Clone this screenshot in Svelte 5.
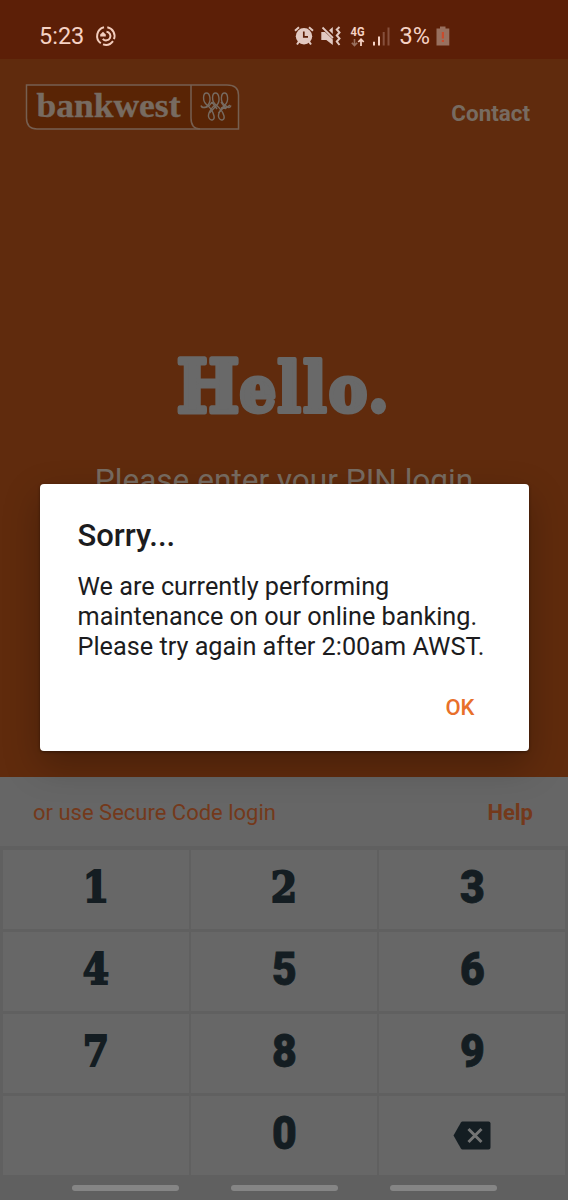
<script>
	const keys = ["1", "2", "3", "4", "5", "6", "7", "8", "9", "", "0", "del"];
	const slab = ["1", "2", "4", "7"];
	const lines = [
		"We are currently performing",
		"maintenance on our online banking.",
		"Please try again after 2:00am AWST.",
	];

	let open = true;
	let pin = "";

	function press(key) {
		if (key == "del") {
			pin = pin.slice(0, -1);
		} else {
			pin = pin + key;
		}
	}
</script>

<div class="screen">
	<header class="status">
		<span class="clock">5:23</span>
		<svg class="sync" width="20" height="20" viewBox="0 0 20 20">
			<g fill="none" stroke="#f3cdbd" stroke-width="2">
				<path d="M8 1.2A9 9 0 0 0 4.8 17.2M7 18.4A9 9 0 0 0 17 15.2M18 13.2A9 9 0 0 0 11.3 1.2" />
				<path d="M10.5 5.8A4.3 4.3 0 1 1 6.8 12.8" />
			</g>
			<path d="M4.2 8.6L7 5.8L9.8 8.6V10.5H4.2Z" fill="#f3cdbd" />
		</svg>
		<div class="indicators">
			<svg width="20" height="20" viewBox="0 0 20 20">
				<path d="M1 4.7L5 1.2M19 4.7L15 1.2M5 15.5L3 18.5M15 15.5L17 18.5" stroke="#e2c9c1" stroke-width="2" />
				<circle cx="10" cy="10.2" r="8.2" fill="#e2c9c1" />
				<path d="M9.8 5.5V10.8H14" fill="none" stroke="#5c1f07" stroke-width="1.7" />
			</svg>
			<svg class="mute" width="20" height="20" viewBox="0 0 20 20">
				<path d="M.3 6H4L11.8 13.5V19L5.3 14H.3ZM11.8 1V8L8 4.3Z" fill="#e2c9c1" />
				<path d="M1.5 1.5L12 12" stroke="#e2c9c1" stroke-width="1.8" />
				<path d="M18.5 1L15.8 3.5L18.5 6.5L15.8 9.5L18.5 12.5L15.8 15.5L18.5 19" fill="none" stroke="#e2c9c1" stroke-width="2" />
			</svg>
			<svg class="net" width="16" height="21" viewBox="0 0 16 21">
				<text x="0.5" y="10" textLength="14" lengthAdjust="spacingAndGlyphs">4G</text>
				<path d="M4.5 13V19.5M1.8 16.7L4.5 19.6L7.2 16.7" fill="none" stroke="#99705f" stroke-width="1.6" />
				<path d="M11 20V13.5M8.3 16L11 13.2L13.7 16" fill="none" stroke="#f6d2c4" stroke-width="1.8" />
			</svg>
			<svg class="signal" width="18" height="19" viewBox="0 0 18 19">
				<path d="M0 14.7H2V18.5H0ZM5 9.5H7V18.5H5Z" fill="#f6d2c4" />
				<path d="M9.7 5H11.7V18.5H9.7ZM14.5 .5H16.5V18.5H14.5Z" fill="#86503c" />
			</svg>
			<span class="percent">3%</span>
			<svg class="battery" width="14" height="20" viewBox="0 0 14 20">
				<path d="M4 .5H9.5V2.5H13.3V19.5H.5V2.5H4Z" fill="#98705f" />
				<path d="M6.9 6V12.5M6.9 14V16" stroke="#c84b2d" stroke-width="2.2" />
			</svg>
		</div>
	</header>

	<main class="hero">
		<div class="top">
			<svg class="logo" width="214" height="46" viewBox="0 0 214 46">
				<path d="M1.5 1H202Q213.5 1 213.5 11V45H12Q1.5 45 1.5 34Z" fill="#592405" stroke="#765f51" stroke-width="1.5" />
				<path d="M166 1V34Q166 45 175 45" fill="none" stroke="#765f51" stroke-width="1.5" />
				<text x="11.5" y="32.5" textLength="144" lengthAdjust="spacingAndGlyphs">bankwest</text>
				<g fill="none" stroke="#776b61" stroke-width="1.4">
					<path d="M183 21C186.5 17 185 9 181.5 9S177 17 182 21S188 28 189 32S186 37.5 184 34S186 24 190 21" />
					<path d="M192 21C195.5 17 194 9 190.5 9S186 17 191 21S198 28 199 32S196 37.5 194 34S196 24 200 21" />
					<path d="M200 21C204 17 203 9 199.5 9S195 17 199 20.5S205 24.5 206 21.5" />
					<path d="M183 21C181 24.5 176.5 24 176 21.5" />
					<path d="M192 21L184.5 29M201 21L193.5 29M187 18L192 25M196 18L201 25M179 23.5Q183 24.5 187 18M196 23.5Q200 26 205 21" />
				</g>
			</svg>
			<a class="contact" href="#contact">Contact</a>
		</div>
		<svg class="hello" width="220" height="70" viewBox="0 0 220 70">
			<text x="3" y="60.5" transform="scale(.92 1)">H<tspan class="round" x="71.5">e</tspan><tspan class="stem" x="112 140">ll</tspan><tspan class="round" x="168.5 211.5">o.</tspan></text>
		</svg>
		<p class="prompt">Please enter your PIN login</p>
	</main>

	<div class="links">
		<a class="secure" href="#secure">or use Secure Code login</a>
		<a class="help" href="#help">Help</a>
	</div>

	<div class="keypad">
		{#each keys as key}
			<button class="key" class:slab={slab.includes(key)} on:click={() => press(key)} aria-label={key || "blank"}>
				{#if key == "del"}
					<svg width="38" height="29" viewBox="0 0 38 29">
						<path d="M9.5 .5H35.5Q37.5 .5 37.5 2.5V26.5Q37.5 28.5 35.5 28.5H9.5Q8.5 28.5 7.9 27.5L.5 14.5L7.9 1.5Q8.5 .5 9.5 .5Z" fill="#141d22" />
						<path d="M15.5 8L28.5 21M28.5 8L15.5 21" stroke="#737474" stroke-width="3" />
					</svg>
				{:else}
					<span>{key}</span>
				{/if}
			</button>
		{/each}
	</div>

	<nav class="gestures">
		<i></i>
		<i></i>
		<i></i>
	</nav>

	{#if open}
		<div class="overlay">
			<div class="dialog">
				<h2>Sorry...</h2>
				<div class="message">
					{#each lines as line}
						<div>{line}</div>
					{/each}
				</div>
				<button class="ok" on:click={() => (open = false)}>OK</button>
			</div>
		</div>
	{/if}
</div>

<style>
	:global(body) {
		margin: 0;
	}

	.screen {
		position: relative;
		display: flex;
		flex-direction: column;
		width: 568px;
		height: 1200px;
		overflow: hidden;
		background: #606060;
		font-family: Roboto, sans-serif;
	}

	a {
		text-decoration: none;
	}

	button {
		border: 0;
		margin: 0;
		padding: 0;
		font-family: inherit;
	}

	svg {
		overflow: visible;
	}

	.status {
		display: flex;
		align-items: center;
		box-sizing: border-box;
		height: 59px;
		padding: 13px 118px 0 39px;
		background: #5c1f07;
		color: #f6d2c4;
		font-size: 23.5px;
	}

	.sync {
		margin-left: 12px;
	}

	.indicators {
		display: flex;
		align-items: center;
		margin-left: auto;
	}

	.mute {
		margin-left: 7px;
	}

	.net {
		margin-left: 9px;
	}

	.net text {
		font-size: 12px;
		font-weight: 700;
		fill: #f6d2c4;
	}

	.signal {
		margin-left: 7px;
	}

	.percent {
		margin-left: 9px;
	}

	.battery {
		margin-left: 6px;
	}

	.hero {
		display: flex;
		flex-direction: column;
		align-items: center;
		height: 718px;
		background: #602b0d;
	}

	.top {
		display: flex;
		justify-content: space-between;
		box-sizing: border-box;
		width: 100%;
		padding: 25px 38px 0 25px;
	}

	.logo text {
		font-family: "Liberation Serif", serif;
		font-size: 34px;
		font-weight: 700;
		fill: #776b61;
		stroke: #776b61;
		stroke-width: 0.4;
	}

	.contact {
		margin-top: 16px;
		color: #776b61;
		font-size: 22.4px;
		font-weight: 700;
		line-height: 27px;
	}

	.hello {
		margin-top: 221px;
	}

	.hello text {
		font-family: "DejaVu Serif", serif;
		font-size: 72px;
		font-weight: 700;
		fill: #696969;
		stroke: #696969;
		stroke-width: 5;
		stroke-linejoin: round;
	}

	.hello .round {
		font-size: 62px;
	}

	.hello .stem {
		font-size: 69px;
		stroke-width: 4;
	}

	.prompt {
		margin: 42px 0 0;
		color: #776b61;
		font-size: 31.6px;
		line-height: 36px;
	}

	.links {
		display: flex;
		align-items: center;
		justify-content: space-between;
		box-sizing: border-box;
		height: 69px;
		padding: 2px 35px 0 33px;
		background: #666;
		color: #74391b;
		font-size: 22px;
	}

	.links a {
		color: inherit;
	}

	.help {
		font-weight: 700;
	}

	.keypad {
		display: grid;
		grid-template-columns: repeat(3, 1fr);
		grid-template-rows: repeat(4, 1fr);
		gap: 2.5px;
		box-sizing: border-box;
		height: 329px;
		padding: 3.5px 3px 0;
	}

	.key {
		display: flex;
		align-items: center;
		justify-content: center;
		padding-bottom: 4px;
		background: #676767;
		color: #141d22;
		font-size: 46px;
		font-weight: 900;
		-webkit-text-stroke: 0.8px #141d22;
	}

	.key span {
		transform: scaleX(0.93);
	}

	.key svg {
		margin-top: 5px;
	}

	.slab {
		font-family: "DejaVu Serif", serif;
		font-size: 43px;
		-webkit-text-stroke: 2px #141d22;
	}

	.slab span {
		transform: scaleX(0.88);
	}

	.gestures {
		display: flex;
		justify-content: center;
		gap: 52px;
		height: 15px;
		padding-top: 10px;
	}

	.gestures i {
		width: 107px;
		height: 6px;
		border-radius: 3px;
		background: #858585;
	}

	.overlay {
		position: absolute;
		inset: 59px 0 25px;
		display: flex;
		align-items: center;
		justify-content: center;
	}

	.dialog {
		display: flex;
		flex-direction: column;
		box-sizing: border-box;
		width: 489px;
		height: 267px;
		padding: 34px 38px 0;
		border-radius: 4px;
		background: #fff;
		box-shadow: 0 14px 36px rgba(0, 0, 0, 0.26), 0 1px 3px rgba(0, 0, 0, 0.4);
		color: #1c1c1e;
	}

	h2 {
		margin: 0;
		font-size: 31px;
		font-weight: 500;
		line-height: 36px;
	}

	.message {
		margin-top: 18px;
		font-size: 25.25px;
		line-height: 30px;
		white-space: nowrap;
	}

	.ok {
		align-self: flex-end;
		margin: 33px 16px 0 0;
		background: none;
		color: #e8702a;
		font-size: 22px;
		font-weight: 500;
		line-height: 26px;
	}
</style>
